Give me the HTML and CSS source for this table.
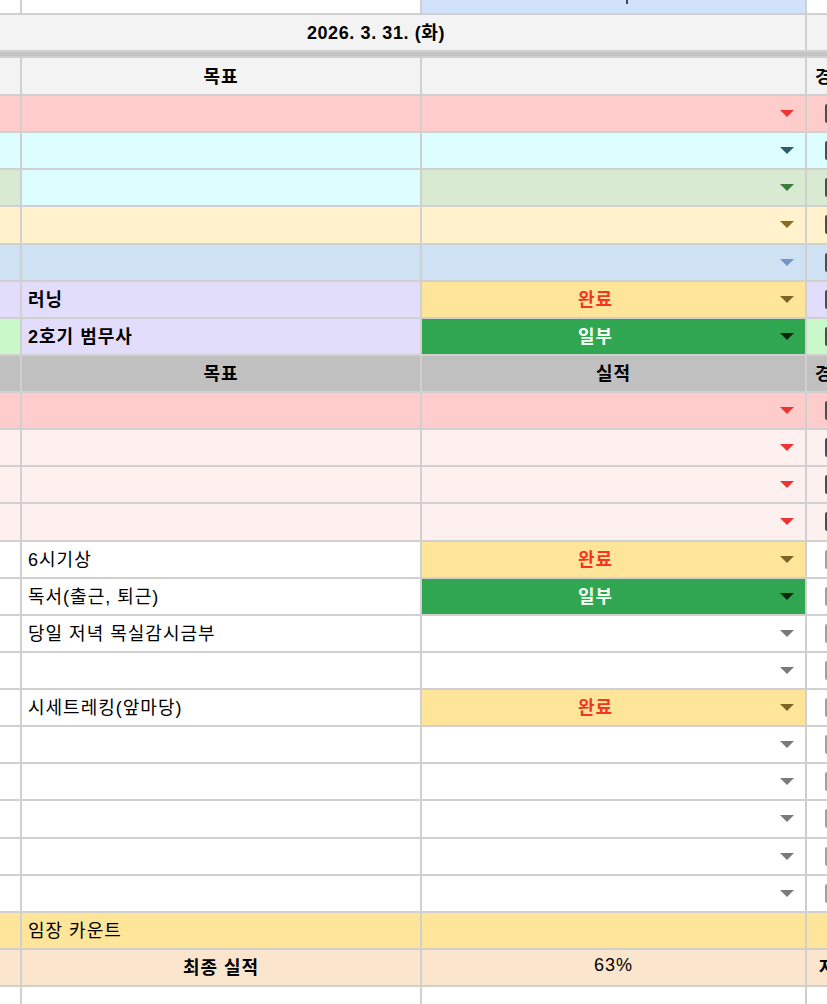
FILE: index.html
```html
<!DOCTYPE html>
<html lang="ko">
<head>
<meta charset="utf-8">
<title>Sheet</title>
<link rel="stylesheet" href="styles.css">
</head>
<body>
<div class="sheet">
  <div class="row r-top">
    <div class="cell bg-white"></div>
    <div class="cell bg-white"></div>
    <div class="cell bg-topblue top-mark-cell"><span class="top-mark"></span></div>
    <div class="cell bg-white"></div>
  </div>
  <div class="row r-date">
    <div class="cell date-cell bold">2026. 3. 31. (화)</div>
    <div class="cell bg-lightgray"></div>
  </div>
  <div class="band"></div>
  <div class="row r-head">
    <div class="cell bg-lightgray"></div>
    <div class="cell bg-lightgray center bold">목표</div>
    <div class="cell bg-lightgray"></div>
    <div class="cell bg-lightgray side-text bold">경과</div>
  </div>

  <div class="row">
    <div class="cell bg-pink"></div>
    <div class="cell bg-pink"></div>
    <div class="cell bg-pink dd"><span class="dd-text"></span><span class="dd-arrow"><i class="tri a-red"></i></span></div>
    <div class="cell bg-pink"><span class="chk dark"></span></div>
  </div>
  <div class="row">
    <div class="cell bg-cyan"></div>
    <div class="cell bg-cyan"></div>
    <div class="cell bg-cyan dd"><span class="dd-text"></span><span class="dd-arrow"><i class="tri a-navy"></i></span></div>
    <div class="cell bg-cyan"><span class="chk dark"></span></div>
  </div>
  <div class="row">
    <div class="cell bg-sage"></div>
    <div class="cell bg-cyan"></div>
    <div class="cell bg-sage dd"><span class="dd-text"></span><span class="dd-arrow"><i class="tri a-green"></i></span></div>
    <div class="cell bg-sage"><span class="chk dark"></span></div>
  </div>
  <div class="row">
    <div class="cell bg-cream"></div>
    <div class="cell bg-cream"></div>
    <div class="cell bg-cream dd"><span class="dd-text"></span><span class="dd-arrow"><i class="tri a-brown"></i></span></div>
    <div class="cell bg-cream"><span class="chk dark"></span></div>
  </div>
  <div class="row">
    <div class="cell bg-blue"></div>
    <div class="cell bg-blue"></div>
    <div class="cell bg-blue dd"><span class="dd-text"></span><span class="dd-arrow"><i class="tri a-blue"></i></span></div>
    <div class="cell bg-blue"><span class="chk dark"></span></div>
  </div>
  <div class="row">
    <div class="cell bg-lavender"></div>
    <div class="cell bg-lavender text bold">러닝</div>
    <div class="cell bg-yellow dd"><span class="dd-text done">완료</span><span class="dd-arrow"><i class="tri a-olive"></i></span></div>
    <div class="cell bg-lavender"><span class="chk dark"></span></div>
  </div>
  <div class="row">
    <div class="cell bg-mint"></div>
    <div class="cell bg-lavender text bold">2호기 범무사</div>
    <div class="cell bg-green dd"><span class="dd-text part">일부</span><span class="dd-arrow"><i class="tri a-black"></i></span></div>
    <div class="cell bg-mint"><span class="chk dark"></span></div>
  </div>

  <div class="row">
    <div class="cell bg-gray"></div>
    <div class="cell bg-gray center bold">목표</div>
    <div class="cell bg-gray center bold">실적</div>
    <div class="cell bg-gray side-text bold">경과</div>
  </div>

  <div class="row">
    <div class="cell bg-pink"></div>
    <div class="cell bg-pink"></div>
    <div class="cell bg-pink dd"><span class="dd-text"></span><span class="dd-arrow"><i class="tri a-red"></i></span></div>
    <div class="cell bg-pink"><span class="chk dark"></span></div>
  </div>
  <div class="row">
    <div class="cell bg-blush"></div>
    <div class="cell bg-blush"></div>
    <div class="cell bg-blush dd"><span class="dd-text"></span><span class="dd-arrow"><i class="tri a-red"></i></span></div>
    <div class="cell bg-blush"><span class="chk dark"></span></div>
  </div>
  <div class="row">
    <div class="cell bg-blush"></div>
    <div class="cell bg-blush"></div>
    <div class="cell bg-blush dd"><span class="dd-text"></span><span class="dd-arrow"><i class="tri a-red"></i></span></div>
    <div class="cell bg-blush"><span class="chk dark"></span></div>
  </div>
  <div class="row">
    <div class="cell bg-blush"></div>
    <div class="cell bg-blush"></div>
    <div class="cell bg-blush dd"><span class="dd-text"></span><span class="dd-arrow"><i class="tri a-red"></i></span></div>
    <div class="cell bg-blush"><span class="chk dark"></span></div>
  </div>

  <div class="row">
    <div class="cell bg-white"></div>
    <div class="cell bg-white text">6시기상</div>
    <div class="cell bg-yellow dd"><span class="dd-text done">완료</span><span class="dd-arrow"><i class="tri a-olive"></i></span></div>
    <div class="cell bg-white"><span class="chk"></span></div>
  </div>
  <div class="row">
    <div class="cell bg-white"></div>
    <div class="cell bg-white text">독서(출근, 퇴근)</div>
    <div class="cell bg-green dd"><span class="dd-text part">일부</span><span class="dd-arrow"><i class="tri a-black"></i></span></div>
    <div class="cell bg-white"><span class="chk"></span></div>
  </div>
  <div class="row">
    <div class="cell bg-white"></div>
    <div class="cell bg-white text">당일 저녁 목실감시금부</div>
    <div class="cell bg-white dd"><span class="dd-text"></span><span class="dd-arrow"><i class="tri a-gray"></i></span></div>
    <div class="cell bg-white"><span class="chk"></span></div>
  </div>
  <div class="row">
    <div class="cell bg-white"></div>
    <div class="cell bg-white text"></div>
    <div class="cell bg-white dd"><span class="dd-text"></span><span class="dd-arrow"><i class="tri a-gray"></i></span></div>
    <div class="cell bg-white"><span class="chk"></span></div>
  </div>
  <div class="row">
    <div class="cell bg-white"></div>
    <div class="cell bg-white text">시세트레킹(앞마당)</div>
    <div class="cell bg-yellow dd"><span class="dd-text done">완료</span><span class="dd-arrow"><i class="tri a-olive"></i></span></div>
    <div class="cell bg-white"><span class="chk"></span></div>
  </div>
  <div class="row">
    <div class="cell bg-white"></div>
    <div class="cell bg-white"></div>
    <div class="cell bg-white dd"><span class="dd-text"></span><span class="dd-arrow"><i class="tri a-gray"></i></span></div>
    <div class="cell bg-white"><span class="chk"></span></div>
  </div>
  <div class="row">
    <div class="cell bg-white"></div>
    <div class="cell bg-white"></div>
    <div class="cell bg-white dd"><span class="dd-text"></span><span class="dd-arrow"><i class="tri a-gray"></i></span></div>
    <div class="cell bg-white"><span class="chk"></span></div>
  </div>
  <div class="row">
    <div class="cell bg-white"></div>
    <div class="cell bg-white"></div>
    <div class="cell bg-white dd"><span class="dd-text"></span><span class="dd-arrow"><i class="tri a-gray"></i></span></div>
    <div class="cell bg-white"><span class="chk"></span></div>
  </div>
  <div class="row">
    <div class="cell bg-white"></div>
    <div class="cell bg-white"></div>
    <div class="cell bg-white dd"><span class="dd-text"></span><span class="dd-arrow"><i class="tri a-gray"></i></span></div>
    <div class="cell bg-white"><span class="chk"></span></div>
  </div>
  <div class="row">
    <div class="cell bg-white"></div>
    <div class="cell bg-white"></div>
    <div class="cell bg-white dd"><span class="dd-text"></span><span class="dd-arrow"><i class="tri a-gray"></i></span></div>
    <div class="cell bg-white"><span class="chk"></span></div>
  </div>

  <div class="row">
    <div class="cell bg-yellow"></div>
    <div class="cell bg-yellow text">임장 카운트</div>
    <div class="cell bg-yellow"></div>
    <div class="cell bg-yellow"></div>
  </div>
  <div class="row">
    <div class="cell bg-peach"></div>
    <div class="cell bg-peach center bold">최종 실적</div>
    <div class="cell bg-peach center">63%</div>
    <div class="cell bg-peach side-text side-far bold">자동</div>
  </div>
  <div class="row">
    <div class="cell bg-white"></div>
    <div class="cell bg-white"></div>
    <div class="cell bg-white"></div>
    <div class="cell bg-white"></div>
  </div>
</div>
</body>
</html>
```

FILE: styles.css
```css
html, body {
  margin: 0;
  padding: 0;
  background: #ffffff;
}

body {
  font-family: "Liberation Sans", "Noto Sans CJK KR", sans-serif;
  font-size: 18px;
  letter-spacing: 1px;
  color: #000000;
  overflow: hidden;
}

.sheet {
  width: 827px;
  height: 1004px;
  overflow: hidden;
  display: flex;
  flex-direction: column;
  gap: 2px;
  background: #d0d0d0;
}

.row {
  display: grid;
  grid-template-columns: 20px 398px 383px 1fr;
  column-gap: 2px;
  height: 35.125px;
  flex: none;
}

.r-top { height: 13px; }
.r-date { height: 35px; }
.r-head { height: 36px; }

.band {
  height: 4px;
  flex: none;
  background: #c4c4c4;
}

.cell {
  display: flex;
  align-items: center;
  overflow: hidden;
  white-space: nowrap;
  min-width: 0;
  padding-bottom: 3px;
  box-sizing: border-box;
}

.bold { font-weight: 700; }
.center { justify-content: center; }
.text { padding-left: 6px; }

.date-cell {
  grid-column: 1 / 4;
  justify-content: center;
  padding-right: 53px;
  background: #f3f3f3;
  letter-spacing: 0.6px;
}

.side-text { padding-left: 8px; }
.side-far { padding-left: 12px; }

.top-mark-cell { padding-left: 204px; padding-bottom: 0; align-items: flex-start; }
.top-mark {
  display: block;
  width: 2px;
  height: 4px;
  background: #3a4a66;
}

/* backgrounds */
.bg-white { background: #ffffff; }
.bg-topblue { background: #d3e2fb; }
.bg-lightgray { background: #f3f3f3; }
.bg-gray { background: #c0c0c0; }
.bg-pink { background: #ffcccc; }
.bg-blush { background: #fff0f0; }
.bg-cyan { background: #dcfeff; }
.bg-sage { background: #d9ead3; }
.bg-cream { background: #fff2cc; }
.bg-blue { background: #cfe2f3; }
.bg-lavender { background: #e3ddfc; }
.bg-mint { background: #c9f9c9; }
.bg-yellow { background: #ffe599; }
.bg-green { background: #31a651; }
.bg-peach { background: #fce5cd; }

/* dropdown chips */
.dd {
  justify-content: space-between;
  padding-bottom: 0;
}
.dd-text {
  flex: 1;
  text-align: center;
  font-weight: 700;
  padding-bottom: 3px;
}
.dd-text.done { color: #f5351f; }
.dd-text.part { color: #f4fff6; }
.dd-arrow {
  width: 36px;
  align-self: stretch;
  display: flex;
  align-items: center;
  justify-content: center;
  flex: none;
}
.tri {
  display: block;
  width: 0;
  height: 0;
  border-left: 7.5px solid transparent;
  border-right: 7.5px solid transparent;
  border-top: 7px solid #777777;
}
.a-red { border-top-color: #ee3333; }
.a-navy { border-top-color: #2f5a70; }
.a-green { border-top-color: #3b7d3b; }
.a-brown { border-top-color: #8a6b22; }
.a-blue { border-top-color: #7593c6; }
.a-olive { border-top-color: #7c6426; }
.a-black { border-top-color: #0c2612; }
.a-gray { border-top-color: #7a7a7a; }

/* checkbox edge in last column */
.chk {
  display: block;
  margin-left: 18px;
  margin-top: 3px;
  width: 14px;
  height: 15px;
  border: 2px solid #a0a0a0;
  border-radius: 2px;
  flex: none;
}
.chk.dark { border-color: #4d4d4d; }
```
